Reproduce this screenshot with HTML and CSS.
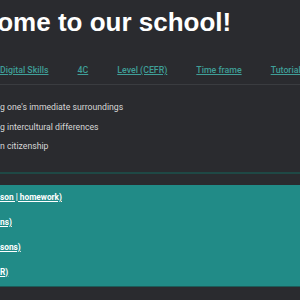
FILE: index.html
```html
<!DOCTYPE html>
<html lang="en">
<head>
<meta charset="utf-8">
<title>Welcome to our school!</title>
<link rel="stylesheet" href="styles.css">
</head>
<body>
<main class="page">
  <h1 class="title">Welcome to our school!</h1>
  <nav class="nav">
    <a href="#" class="nav-link">Digital Skills</a>
    <a href="#" class="nav-link">4C</a>
    <a href="#" class="nav-link">Level (CEFR)</a>
    <a href="#" class="nav-link">Time frame</a>
    <a href="#" class="nav-link">Tutorials</a>
  </nav>
  <ul class="topics">
    <li>g one's immediate surroundings</li>
    <li>g intercultural differences</li>
    <li>n citizenship</li>
  </ul>
  <section class="panel">
    <a href="#" class="panel-link">son | homework)</a>
    <a href="#" class="panel-link">ns)</a>
    <a href="#" class="panel-link">sons)</a>
    <a href="#" class="panel-link">R)</a>
  </section>
</main>
</body>
</html>
```
FILE: styles.css
```css
html, body {
  margin: 0;
  padding: 0;
}
body {
  background: #2a2b2f;
  font-family: Roboto, "Liberation Sans", Arial, sans-serif;
  overflow: hidden;
  width: 300px;
  height: 300px;
}
.page {
  display: flex;
  flex-direction: column;
}
.title {
  margin: 0 0 0 -63px;
  padding-top: 5px;
  font-family: "Liberation Sans", Arial, sans-serif;
  font-size: 26px;
  line-height: 34px;
  font-weight: 700;
  color: #ffffff;
  white-space: nowrap;
}
.nav {
  display: flex;
  gap: 29px;
  margin-top: 25px;
  padding: 0 0 8px 0;
  border-bottom: 1px solid #3a3c40;
  white-space: nowrap;
}
.nav-link {
  font-size: 8.8px;
  line-height: 12px;
  color: #3f9f98;
  text-decoration: underline;
  font-weight: 500;
}
.topics {
  list-style: none;
  margin: 0;
  padding: 13px 0 15px 0;
  border-bottom: 2px solid #1f4845;
}
.topics li {
  font-size: 8.7px;
  line-height: 19.5px;
  color: #d6d6d6;
  white-space: nowrap;
}
.panel {
  margin-top: 11px;
  background: #218b87;
  display: flex;
  flex-direction: column;
  padding: 0 0 1px 0;
  border-bottom: 1px solid #1b5c59;
}
.panel-link {
  font-size: 8.3px;
  line-height: 25px;
  font-weight: 700;
  color: #ffffff;
  text-decoration: underline;
  white-space: nowrap;
}
```
